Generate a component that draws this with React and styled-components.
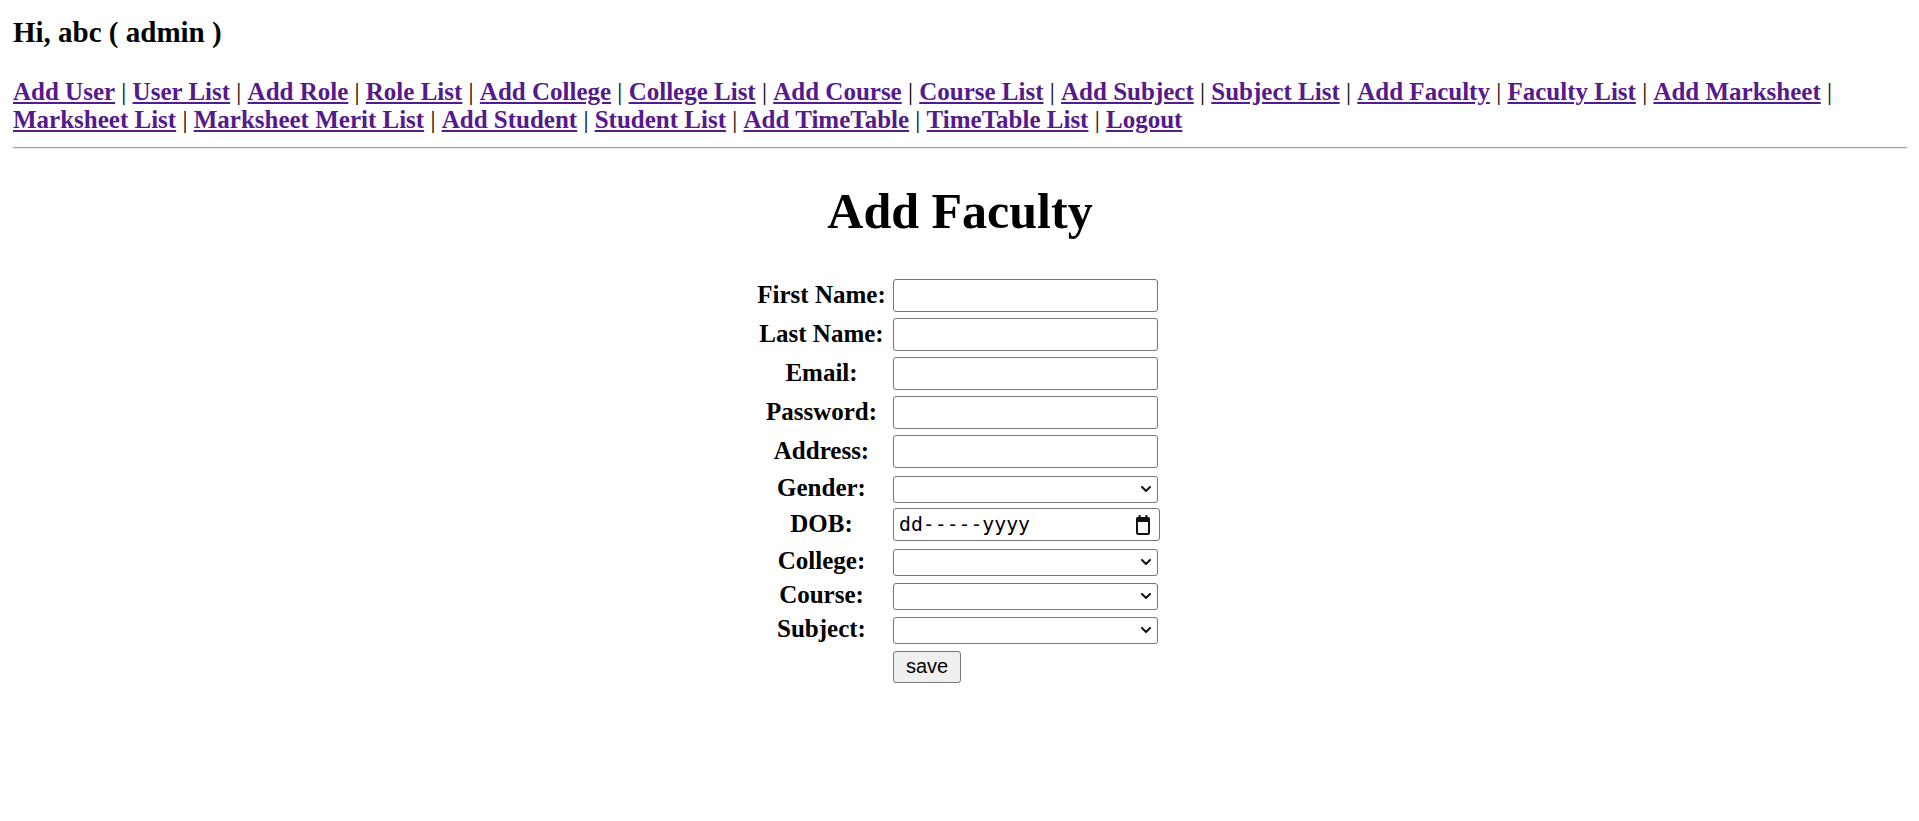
import React from 'react';
import styled, { createGlobalStyle } from 'styled-components';

const GlobalStyle = createGlobalStyle`
  html, body { margin: 0; padding: 0; background: #ffffff; }
  body {
    font-family: "Liberation Serif", "Times New Roman", serif;
    color: #000000;
  }
`;

const Page = styled.div`
  padding: 0 12px 40px 13px;
`;

const Greeting = styled.h3`
  margin: 16px 0 0;
  font-size: 29px;
  line-height: 33px;
  font-weight: bold;
`;

const Nav = styled.nav`
  margin-top: 29px;
  font-size: 25px;
  line-height: 28.3px;
  font-weight: bold;
`;

const NavLink = styled.a`
  color: #551a8b;
  text-decoration: underline;
`;

const Separator = styled.span`
  font-weight: normal;
  color: #000000;
`;

const Divider = styled.hr`
  margin: 12.4px 0 0;
  height: 0;
  border: 0;
  border-top: 1px solid #9a9a9a;
  border-bottom: 1px solid #eeeeee;
`;

const Title = styled.h1`
  margin: 34px 0 0;
  text-align: center;
  font-size: 50px;
  line-height: 57px;
  font-weight: bold;
`;

const Form = styled.form`
  margin-top: 38px;
  display: grid;
  grid-template-columns: 131px 267px;
  column-gap: 6px;
  row-gap: 4px;
  align-items: center;
  justify-content: center;
  padding-right: 4px;
`;

const Label = styled.label`
  display: block;
  text-align: center;
  font-size: 25px;
  line-height: 28px;
  font-weight: bold;
  white-space: nowrap;
`;

const FieldCell = styled.div`
  display: flex;
  align-items: flex-start;
  padding: ${(p) => (p.$compact ? '3px 0 0' : '1px 0')};
`;

const TextInput = styled.input`
  display: block;
  box-sizing: border-box;
  width: 265px;
  height: 33px;
  margin: 0;
  padding: 1px 4px;
  border: 1px solid #767676;
  border-radius: 3px;
  background: #ffffff;
  font: 20px "Liberation Sans", Arial, sans-serif;
  outline: none;
`;

const SelectWrap = styled.div`
  position: relative;
  width: 265px;
  height: 27px;
`;

const Select = styled.select`
  display: block;
  box-sizing: border-box;
  width: 100%;
  height: 100%;
  margin: 0;
  padding: 0 24px 0 4px;
  appearance: none;
  -webkit-appearance: none;
  border: 1px solid #767676;
  border-radius: 3px;
  background-color: #ffffff;
  color: #000000;
  font: 20px "Liberation Sans", Arial, sans-serif;
`;

const Chevron = styled.svg`
  position: absolute;
  top: 10px;
  right: 7px;
  pointer-events: none;
`;

const DateField = styled.div`
  box-sizing: border-box;
  width: 267px;
  height: 33px;
  display: flex;
  align-items: center;
  justify-content: space-between;
  padding: 2px 9px 0 5px;
  border: 1px solid #767676;
  border-radius: 3px;
  background: #ffffff;
`;

const DateText = styled.span`
  font-family: "DejaVu Sans Mono", "Liberation Mono", monospace;
  font-size: 19.8px;
  line-height: 24px;
  color: #000000;
`;

const SaveButton = styled.button`
  box-sizing: border-box;
  width: 68px;
  height: 32px;
  margin: 0;
  padding: 0;
  border: 1px solid #767676;
  border-radius: 3px;
  background: #efefef;
  color: #000000;
  font: 20px "Liberation Sans", Arial, sans-serif;
`;

const CalendarIcon = () => (
  <svg width="14" height="20" viewBox="0 0 14 20" aria-hidden="true">
    <rect x="2.6" y="0" width="2" height="3.5" fill="#111" />
    <rect x="9.4" y="0" width="2" height="3.5" fill="#111" />
    <rect x="1" y="3" width="12" height="16" rx="1.5" fill="none" stroke="#111" strokeWidth="2" />
    <rect x="0" y="2.5" width="14" height="4.5" rx="1" fill="#111" />
  </svg>
);

const SelectBox = ({ children }) => (
  <SelectWrap>
    <Select defaultValue="">{children}</Select>
    <Chevron width="10" height="6" viewBox="0 0 10 6" aria-hidden="true">
      <path d="M1 1 L5 5 L9 1" fill="none" stroke="#111" strokeWidth="2" strokeLinecap="round" strokeLinejoin="round" />
    </Chevron>
  </SelectWrap>
);

const links = [
  'Add User', 'User List', 'Add Role', 'Role List', 'Add College', 'College List',
  'Add Course', 'Course List', 'Add Subject', 'Subject List', 'Add Faculty',
  'Faculty List', 'Add Marksheet', 'Marksheet List', 'Marksheet Merit List',
  'Add Student', 'Student List', 'Add TimeTable', 'TimeTable List', 'Logout',
];

const textFields = ['First Name', 'Last Name', 'Email', 'Password', 'Address'];

export default function App() {
  return (
    <>
      <GlobalStyle />
      <Page>
        <Greeting>Hi, abc ( admin )</Greeting>
        <Nav>
          {links.map((l, i) => (
            <React.Fragment key={l}>
              {i > 0 && <Separator> | </Separator>}
              <NavLink href="#">{l}</NavLink>
            </React.Fragment>
          ))}
        </Nav>
        <Divider />
        <Title>Add Faculty</Title>
        <Form onSubmit={(e) => e.preventDefault()}>
          {textFields.map((f) => (
            <React.Fragment key={f}>
              <Label>{f}:</Label>
              <FieldCell>
                <TextInput type={f === 'Password' ? 'password' : 'text'} />
              </FieldCell>
            </React.Fragment>
          ))}
          <Label>Gender:</Label>
          <FieldCell $compact>
            <SelectBox>
              <option value=""></option>
              <option>Male</option>
              <option>Female</option>
            </SelectBox>
          </FieldCell>
          <Label>DOB:</Label>
          <FieldCell>
            <DateField>
              <DateText>dd-----yyyy</DateText>
              <CalendarIcon />
            </DateField>
          </FieldCell>
          {['College', 'Course', 'Subject'].map((f) => (
            <React.Fragment key={f}>
              <Label>{f}:</Label>
              <FieldCell $compact>
                <SelectBox>
                  <option value=""></option>
                </SelectBox>
              </FieldCell>
            </React.Fragment>
          ))}
          <span />
          <FieldCell $compact>
            <SaveButton type="submit">save</SaveButton>
          </FieldCell>
        </Form>
      </Page>
    </>
  );
}
